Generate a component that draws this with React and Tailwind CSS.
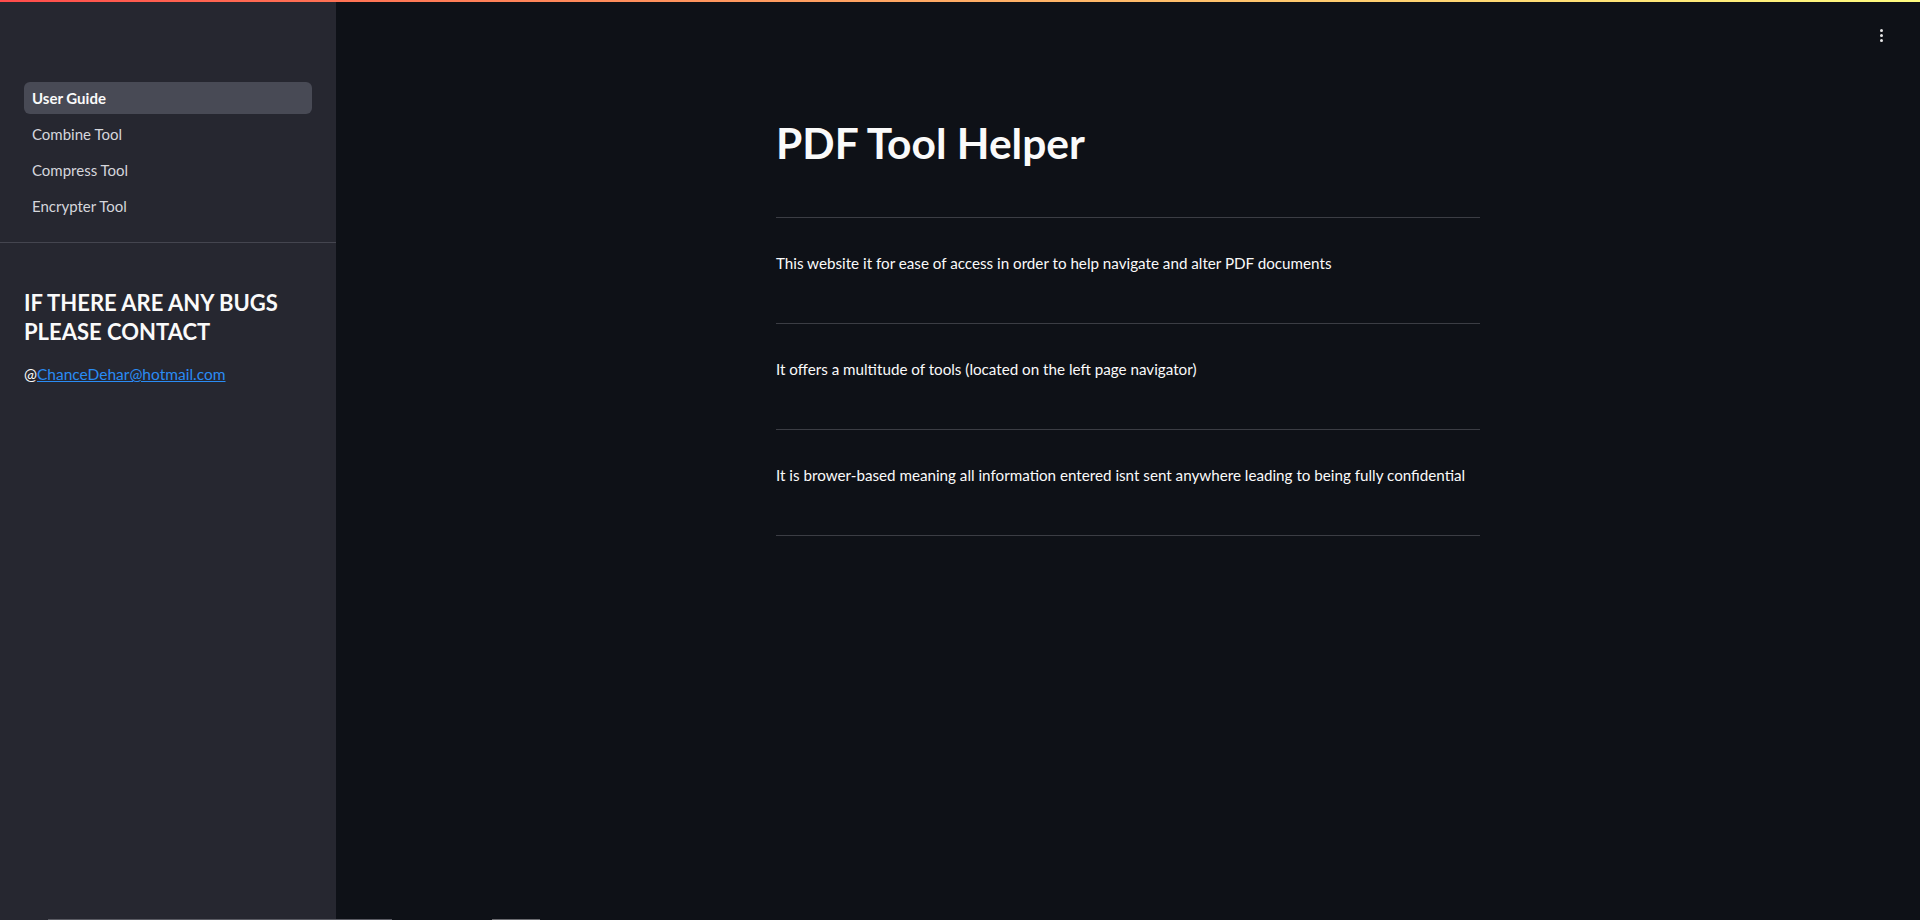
import React from "react";

const navItems = ["User Guide", "Combine Tool", "Compress Tool", "Encrypter Tool"];

const paragraphs = [
  "This website it for ease of access in order to help navigate and alter PDF documents",
  "It offers a multitude of tools (located on the left page navigator)",
  "It is brower-based meaning all information entered isnt sent anywhere leading to being fully confidential",
];

const App = () => {
  return (
    <div className="relative flex h-[920px] w-full overflow-hidden bg-[#0e1117] text-[#fafafa] [font-family:Lato,'Liberation_Sans',sans-serif]">
      {/* top decoration */}
      <div className="absolute left-0 right-0 top-0 z-10 h-[2px] bg-gradient-to-r from-[#ff4b4b] to-[#fffd80]" />

      {/* Sidebar */}
      <aside className="flex h-full w-[336px] shrink-0 flex-col bg-[#262730]">
        <nav className="flex flex-col gap-1 px-6 pt-[82px]">
          {navItems.map((item, i) => (
            <div
              key={item}
              className={
                i === 0
                  ? "flex h-8 items-center rounded-md bg-[#484a55] px-2 text-[15px] font-bold text-[#fafafa]"
                  : "flex h-8 items-center rounded-md px-2 text-[15px] text-[#d5d6dc]"
              }
            >
              {item}
            </div>
          ))}
        </nav>

        <div className="mt-[20px] h-px w-full bg-[#44454f]" />

        <div className="px-6 pt-[45px]">
          <h3 className="text-[22px] font-bold leading-[29px] text-[#fafafa]">
            IF THERE ARE ANY BUGS PLEASE CONTACT
          </h3>
          <p className="mt-4 text-[15.5px] leading-6">
            @
            <a href="#" className="text-[#2a8cf4] underline">
              ChanceDehar@hotmail.com
            </a>
          </p>
        </div>
      </aside>

      {/* Main */}
      <main className="relative flex-1">
        {/* menu dots */}
        <div className="absolute right-[37px] top-[29px] flex flex-col gap-[2px]">
          <span className="h-[3px] w-[3px] rounded-full bg-[#e6e6e6]" />
          <span className="h-[3px] w-[3px] rounded-full bg-[#e6e6e6]" />
          <span className="h-[3px] w-[3px] rounded-full bg-[#e6e6e6]" />
        </div>

        <div className="mx-auto w-[704px] pt-[116px]">
          <h1 className="text-[42.5px] font-bold leading-[53px]">PDF Tool Helper</h1>
          <div className="mt-[48px] h-px w-full bg-[#3b3d44]" />
          {paragraphs.map((p) => (
            <div key={p}>
              <p className="mt-[33px] text-[15.2px] leading-6">{p}</p>
              <div className="mt-[48px] h-px w-full bg-[#3b3d44]" />
            </div>
          ))}
        </div>
      </main>

      {/* bottom scrollbar remnants */}
      <div className="absolute bottom-0 left-[48px] h-px w-[344px] bg-[#5a5b63]" />
      <div className="absolute bottom-0 left-[492px] h-px w-[48px] bg-[#6a6b70]" />
    </div>
  );
};

export default App;
